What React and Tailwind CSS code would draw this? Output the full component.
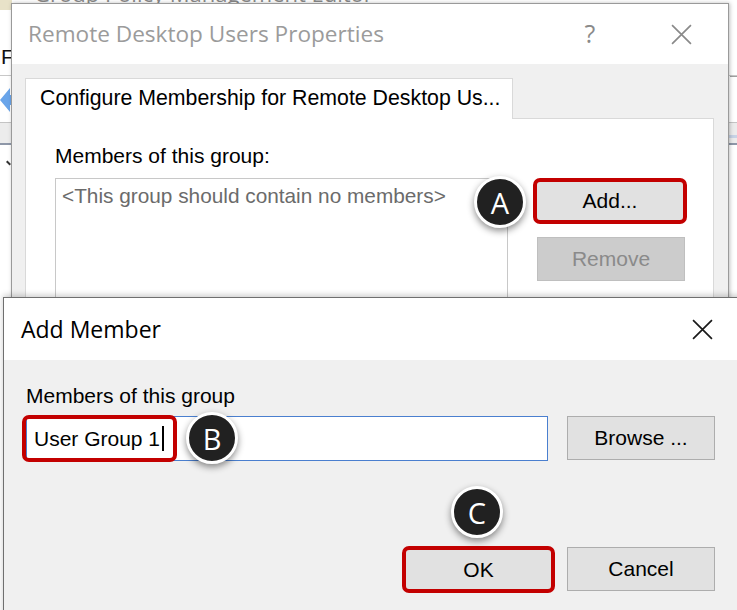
import React from 'react'

const sans = { fontFamily: '"Liberation Sans", Arial, sans-serif' }
const ui = { fontFamily: '"Open Sans", "Noto Sans", sans-serif' }

function Marker({ letter, className }) {
  return (
    <div
      className={`absolute w-[52px] h-[52px] rounded-full bg-[#212121] border-[3px] border-white shadow-[0_3px_7px_rgba(0,0,0,0.45)] flex items-center justify-center text-white text-[29px] leading-none ${className}`}
      style={ui}
    >
      {letter}
    </div>
  )
}

function CloseX({ color = '#1a1a1a', size = 20 }) {
  return (
    <svg width={size} height={size} viewBox="0 0 20 20">
      <path d="M1 1 L19 19 M19 1 L1 19" stroke={color} strokeWidth="1.6" fill="none" />
    </svg>
  )
}

export default function App() {
  return (
    <div className="relative w-[737px] h-[610px] overflow-hidden bg-white" style={sans}>
      {/* window behind: Group Policy Management Editor */}
      <div className="absolute inset-0 bg-white">
        <div className="absolute left-0 top-0 w-[12px] h-[10px] bg-[#e8e2c8]" />
        <div className="absolute left-[34px] top-[-20px] text-[22px] leading-[26px] text-[#8a8a8a] whitespace-nowrap" style={ui}>
          Group Policy Management Editor
        </div>
        <div className="absolute left-[1px] top-[41px] text-[21px] text-[#111]">F</div>
        <div className="absolute left-0 top-[75px] w-full h-px bg-[#c8c8c8]" />
        <svg className="absolute left-0 top-[84px]" width="12" height="32" viewBox="0 0 12 32">
          <path d="M0 16 L10 4 L10 11 L12 11 L12 21 L10 21 L10 28 Z" fill="#6aa5ea" />
        </svg>
        <div className="absolute left-0 top-[122px] w-full h-[23px] bg-[#ececec] border-t border-[#c4c4c4] border-b-2 border-b-[#8e97a8]" />
        <div className="absolute left-[730px] top-[76px] w-[7px] h-px bg-[#a0a0a0]" />
        <div className="absolute left-[728px] top-[135px] w-[9px] h-[3px] bg-[#c7d3e6]" />
        <div className="absolute left-[6px] top-[162px] w-[5px] h-[2px] rotate-45 bg-[#333]" />
      </div>

      {/* Remote Desktop Users Properties */}
      <div className="absolute left-[11px] top-[3px] w-[718px] h-[340px] bg-[#f0f0f0] border border-[#9a9a9a] shadow-[1px_0_4px_rgba(0,0,0,0.25)] flex flex-col">
        <div className="h-[60px] bg-white flex items-center shrink-0">
          <span className="flex-1 pl-[16px] text-[22.6px] text-[#9b9b9b]" style={ui}>
            Remote Desktop Users Properties
          </span>
          <span className="w-[88px] text-center text-[25px] text-[#8a8a8a]" style={ui}>?</span>
          <span className="w-[94px] flex justify-center">
            <CloseX color="#8a8a8a" size={21} />
          </span>
        </div>
        <div className="pl-[13px] pt-[14px]">
          <div className="relative z-10 -mb-px w-[488px] h-[41px] bg-white border border-[#d9d9d9] border-b-0 flex items-center pl-[14px] text-[21.3px] text-black whitespace-nowrap">
            Configure Membership for Remote Desktop Us...
          </div>
          <div className="w-[689px] h-[260px] bg-white border border-[#d9d9d9] pl-[29px] pt-[25px]">
            <div className="text-[21px] leading-[24px] text-black">Members of this group:</div>
            <div className="flex mt-[10px]">
              <div className="w-[453px] h-[200px] border border-[#c8c8c8] pl-[6px] pt-[5px] text-[20.8px] leading-[24px] text-[#6b6b6b] whitespace-nowrap">
                &lt;This group should contain no members&gt;
              </div>
              <div className="flex flex-col ml-[25px]">
                <button className="w-[154px] h-[46px] bg-[#e1e1e1] border-4 border-[#c30000] rounded-[7px] text-[21px] text-black">
                  Add...
                </button>
                <button className="ml-[4px] mt-[13px] w-[148px] h-[44px] bg-[#cccccc] border border-[#bfbfbf] text-[21px] text-[#8a8a8a]">
                  Remove
                </button>
              </div>
            </div>
          </div>
        </div>
      </div>

      {/* Add Member */}
      <div className="absolute left-[3px] top-[297px] w-[745px] h-[330px] bg-[#f0f0f0] border border-[#6f6f6f] shadow-[0_-2px_6px_rgba(0,0,0,0.2)] flex flex-col">
        <div className="h-[62px] bg-white flex items-center shrink-0">
          <span className="flex-1 pl-[17px] text-[23px] text-black" style={ui}>Add Member</span>
          <span className="w-[55px] shrink-0 flex">
            <CloseX color="#1a1a1a" size={21} />
          </span>
        </div>
        <div className="pl-[22px] pt-[24px]">
          <div className="text-[21px] leading-[24px] text-black">Members of this group</div>
          <div className="flex mt-[8px] w-[689px]">
            <div className="relative w-[522px] h-[45px] bg-white border border-[#4a7fcf] flex items-center pl-[7px] text-[21px] text-black">
              <span>User Group 1</span>
              <span className="ml-[2px] w-[2px] h-[25px] bg-black" />
              <div className="absolute left-[-5px] top-[-2px] w-[155px] h-[47px] border-4 border-[#c30000] rounded-[7px]" />
            </div>
            <button className="ml-[19px] w-[148px] h-[44px] bg-[#e1e1e1] border border-[#adadad] text-[21px] text-black">
              Browse ...
            </button>
          </div>
          <div className="flex justify-end gap-[12px] w-[689px] mt-[85px]">
            <button className="w-[153px] h-[47px] bg-[#e1e1e1] border-4 border-[#c30000] rounded-[7px] text-[21px] text-black">
              OK
            </button>
            <button className="mt-px w-[148px] h-[44px] bg-[#e1e1e1] border border-[#adadad] text-[21px] text-black">
              Cancel
            </button>
          </div>
        </div>
      </div>

      <Marker letter="A" className="left-[474px] top-[176px]" />
      <Marker letter="B" className="left-[186px] top-[412px]" />
      <Marker letter="C" className="left-[451px] top-[486px]" />
    </div>
  )
}
